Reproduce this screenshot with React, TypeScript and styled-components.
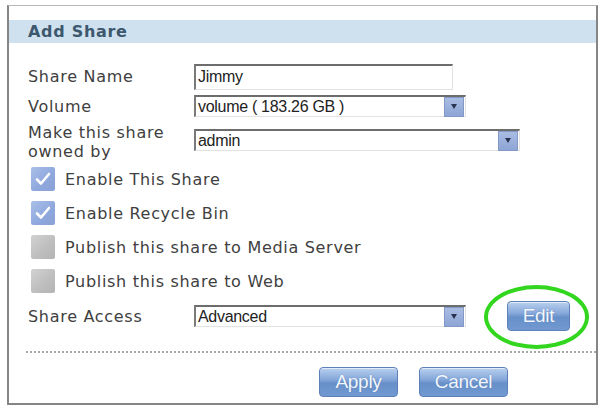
import React from 'react';
import styled, { createGlobalStyle } from 'styled-components';

const GlobalStyle = createGlobalStyle`
  html, body {
    margin: 0;
    padding: 0;
    background: #ffffff;
  }
  body {
    width: 604px;
    height: 409px;
    overflow: hidden;
  }
`;

const Page = styled.div`
  padding: 5px 6px 4px 7px;
`;

const Panel = styled.div`
  box-sizing: border-box;
  width: 591px;
  height: 400px;
  border: 2px solid #858585;
  border-top: 1px solid #b8b8b8;
  padding-top: 14px;
  display: flex;
  flex-direction: column;
`;

const Header = styled.div`
  height: 23px;
  background: #cfe1ee;
  display: flex;
  align-items: center;
  padding-left: 19px;
  font-family: 'DejaVu Sans', Verdana, sans-serif;
  font-weight: bold;
  font-size: 16px;
  letter-spacing: 0.7px;
  color: #3d586e;
`;

const Form = styled.div`
  display: flex;
  flex-direction: column;
  padding: 20px 0 0 19px;
`;

const Row = styled.div<{ $h: number; $align?: string; $mt?: number }>`
  display: flex;
  align-items: ${({ $align }) => $align || 'center'};
  height: ${({ $h }) => $h}px;
  margin-top: ${({ $mt }) => $mt || 0}px;
`;

const Label = styled.div`
  width: 166px;
  flex-shrink: 0;
  font-family: 'DejaVu Sans', Verdana, sans-serif;
  font-size: 16px;
  letter-spacing: 0.7px;
  line-height: 19px;
  color: #404040;
`;

const TextBox = styled.div<{ $w: number; $h: number; $mt?: number }>`
  box-sizing: border-box;
  width: ${({ $w }) => $w}px;
  height: ${({ $h }) => $h}px;
  margin-top: ${({ $mt }) => $mt || 0}px;
  border-top: 2px solid #6d6d6d;
  border-left: 2px solid #7a7a7a;
  border-right: 1px solid #e2e2e2;
  border-bottom: 1px solid #e2e2e2;
  background: #fff;
  display: flex;
  align-items: center;
  padding: 0 2px 0 2px;
  font-family: 'Liberation Sans', Arial, sans-serif;
  font-size: 16px;
  letter-spacing: -0.3px;
  color: #222;
`;

const Value = styled.span`
  flex: 1;
  white-space: nowrap;
`;

const DropButton = styled.div`
  box-sizing: border-box;
  width: 20px;
  height: 20px;
  border: 1px solid #8299c8;
  background: linear-gradient(#a9bce3, #8da5d5);
  display: flex;
  align-items: center;
  justify-content: center;
  margin-right: -1px;
`;

const Arrow = styled.div`
  width: 0;
  height: 0;
  border-left: 3.5px solid transparent;
  border-right: 3.5px solid transparent;
  border-top: 5px solid #2a3350;
`;

const CheckRow = styled.div`
  display: flex;
  align-items: center;
  height: 34px;
  padding-left: 3px;
`;

const Box = styled.div<{ $on: boolean }>`
  width: 24px;
  height: 24px;
  border-radius: 2px;
  margin-right: 10px;
  flex-shrink: 0;
  background: ${({ $on }) =>
    $on
      ? 'linear-gradient(135deg, #aac0ea, #8ea7dc 60%, #8aa2d6)'
      : 'linear-gradient(135deg, #d2d2d2, #bdbdbd 60%, #b4b4b4)'};
  display: flex;
  align-items: center;
  justify-content: center;
`;

const CheckText = styled.span`
  font-family: 'DejaVu Sans', Verdana, sans-serif;
  font-size: 16px;
  letter-spacing: 0.7px;
  color: #404040;
`;

const EditWrap = styled.div`
  position: relative;
  margin-left: 41px;
`;

const Ring = styled.div`
  position: absolute;
  left: -23px;
  top: -16px;
  width: 97px;
  height: 56px;
  border: 4px solid #33d61f;
  border-radius: 50%;
  pointer-events: none;
`;

const Button = styled.div<{ $w: number }>`
  box-sizing: border-box;
  width: ${({ $w }) => $w}px;
  height: 30px;
  border: 1px solid #5c80b8;
  border-radius: 4px;
  background: linear-gradient(#b9d0ee 0%, #86a8da 40%, #6790ca 55%, #7299d0 100%);
  box-shadow: inset 0 1px 0 rgba(255, 255, 255, 0.6);
  display: flex;
  align-items: center;
  justify-content: center;
  font-family: 'Liberation Sans', Arial, sans-serif;
  font-size: 19px;
  letter-spacing: -0.3px;
  color: #f2f7fd;
  text-shadow: 0 0 1px rgba(60, 90, 140, 0.5);
`;

const Divider = styled.div`
  margin: 17px 0 0 17px;
  border-top: 2px dotted #a6a6a6;
`;

const Actions = styled.div`
  display: flex;
  justify-content: flex-end;
  gap: 21px;
  padding: 14px 88px 0 0;
`;

const Check = () => (
  <svg width="16" height="14" viewBox="0 0 16 14">
    <path d="M2 7.5 L6 11.5 L14 2" fill="none" stroke="#ffffff" strokeWidth="2.6" strokeLinecap="round" strokeLinejoin="round" />
  </svg>
);

const Select = ({ w, value, mt }: { w: number; value: string; mt?: number }) => (
  <TextBox $w={w} $h={22} $mt={mt}>
    <Value>{value}</Value>
    <DropButton>
      <Arrow />
    </DropButton>
  </TextBox>
);

const checks = [
  { text: 'Enable This Share', on: true },
  { text: 'Enable Recycle Bin', on: true },
  { text: 'Publish this share to Media Server', on: false },
  { text: 'Publish this share to Web', on: false },
];

export default function App() {
  return (
    <>
      <GlobalStyle />
      <Page>
        <Panel>
          <Header>Add Share</Header>
          <Form>
            <Row $h={27}>
              <Label>Share Name</Label>
              <TextBox $w={259} $h={26}>
                <Value>Jimmy</Value>
              </TextBox>
            </Row>
            <Row $h={22} $mt={5}>
              <Label>Volume</Label>
              <Select w={272} value="volume ( 183.26 GB )" />
            </Row>
            <Row $h={39} $align="flex-start" $mt={6}>
              <Label>
                Make this share
                <br />
                owned by
              </Label>
              <Select w={326} value="admin" mt={6} />
            </Row>
            {checks.map((c) => (
              <CheckRow key={c.text}>
                <Box $on={c.on}>{c.on && <Check />}</Box>
                <CheckText>{c.text}</CheckText>
              </CheckRow>
            ))}
            <Row $h={36}>
              <Label>Share Access</Label>
              <Select w={272} value="Advanced" />
              <EditWrap>
                <Button $w={63}>Edit</Button>
                <Ring />
              </EditWrap>
            </Row>
          </Form>
          <Divider />
          <Actions>
            <Button $w={79}>Apply</Button>
            <Button $w={89}>Cancel</Button>
          </Actions>
        </Panel>
      </Page>
    </>
  );
}
